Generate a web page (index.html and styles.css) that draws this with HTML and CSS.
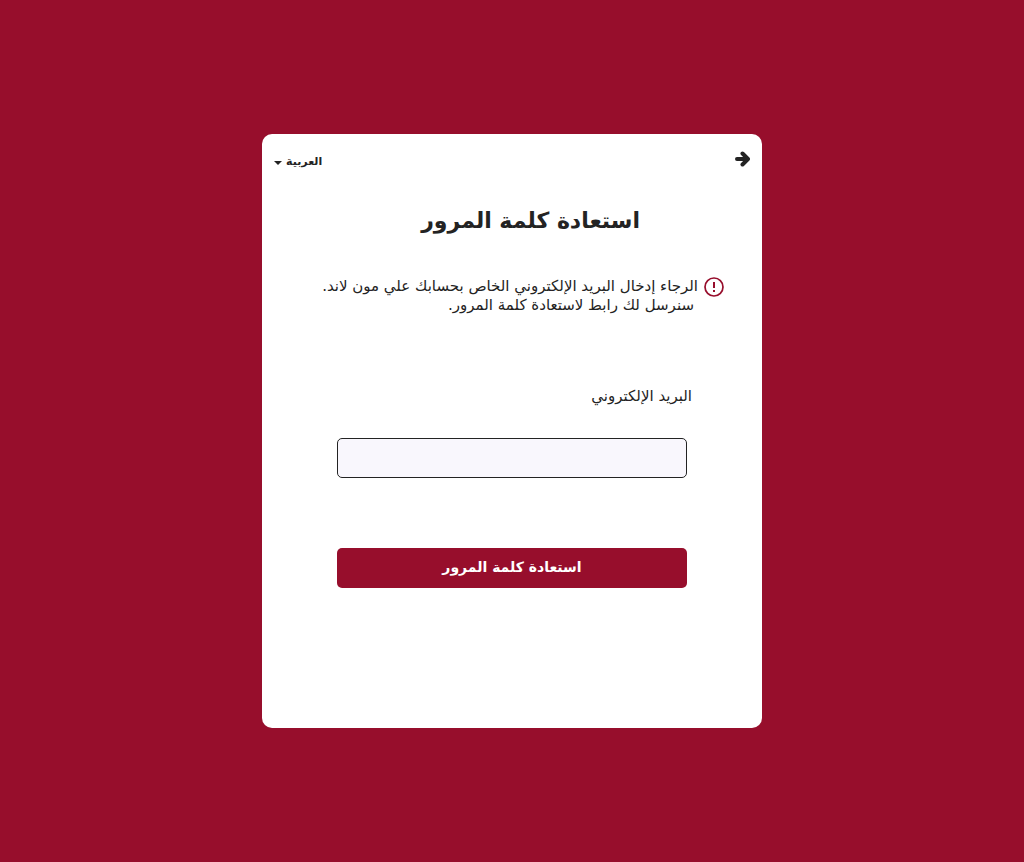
FILE: index.html
```html
<!DOCTYPE html>
<html lang="ar" dir="rtl">
<head>
<meta charset="utf-8">
<meta name="viewport" content="width=device-width, initial-scale=1">
<title>استعادة كلمة المرور</title>
<link rel="stylesheet" href="styles.css">
</head>
<body>
<main class="card">
  <header class="topbar">
    <a class="back" href="#" aria-label="رجوع">
      <svg viewBox="0 0 16 18" width="16" height="18" aria-hidden="true"><path d="M3 9H13M8.500 3.500L14 9L8.500 14.500" fill="none" stroke="currentColor" stroke-width="4" stroke-linecap="round" stroke-linejoin="round"/></svg>
    </a>
    <button class="language" type="button">العربية <span class="caret"></span></button>
  </header>
  <h1 class="title">استعادة كلمة المرور</h1>
  <div class="notice">
    <svg class="notice-icon" viewBox="0 0 20 20" width="20" height="20" aria-hidden="true"><circle cx="10" cy="10" r="9" fill="none" stroke="currentColor" stroke-width="1.700"/><path d="M10 5v6M10 13v2" fill="none" stroke="currentColor" stroke-width="2"/></svg>
    <p class="notice-text">الرجاء إدخال البريد الإلكتروني الخاص بحسابك علي مون لاند.<br><span class="second-line">سنرسل لك رابط لاستعادة كلمة المرور.</span></p>
  </div>
  <form class="form">
    <label class="label" for="email">البريد الإلكتروني</label>
    <input class="field" id="email" type="email">
    <button class="submit" type="button">استعادة كلمة المرور</button>
  </form>
</main>
</body>
</html>
```
FILE: styles.css
```css
* { box-sizing: border-box; }
body {
  margin: 0;
  min-height: 100vh;
  display: grid;
  place-items: center;
  background: #970e2c;
  color: #232323;
  font-family: "DejaVu Sans", sans-serif;
}
.card {
  width: min(500px, 100%);
  padding: 13px 12px 140px;
  border-radius: 10px;
  background: #fff;
}
.topbar { display: flex; justify-content: space-between; align-items: center; height: 24px; }
.back { display: flex; color: #232323; }
.language {
  display: flex;
  align-items: center;
  gap: 4px;
  padding: 4px 0 0;
  border: 0;
  background: none;
  color: inherit;
  font: bold 11px "DejaVu Sans", sans-serif;
}
.caret { margin-top: 4px; border: 4px solid transparent; border-top-color: currentColor; border-bottom: 0; }
.title { margin: 34px 110px 0; font-size: 22px; line-height: 32px; white-space: nowrap; }
.notice { display: flex; gap: 6px; margin: 40px 26px 0; color: #970e2c; }
.notice-icon { flex: none; }
.notice-text { margin: 0; color: #232323; font-size: 15px; line-height: 19px; white-space: nowrap; }
.second-line { padding-inline-start: 4px; }
.form { display: flex; flex-direction: column; margin: 71px 63px 0; }
.label { margin-inline-start: -5px; font-size: 15px; line-height: 20px; }
.field {
  height: 40px;
  margin: 32px 0 70px;
  padding: 0 12px;
  border: 1px solid #232323;
  border-radius: 5px;
  background: #f9f7fd;
  font: inherit;
}
.submit {
  height: 40px;
  padding: 0 12px 2px;
  border: 0;
  border-radius: 5px;
  background: #970e2c;
  color: #fff;
  font: bold 14px "DejaVu Sans", sans-serif;
}
```
